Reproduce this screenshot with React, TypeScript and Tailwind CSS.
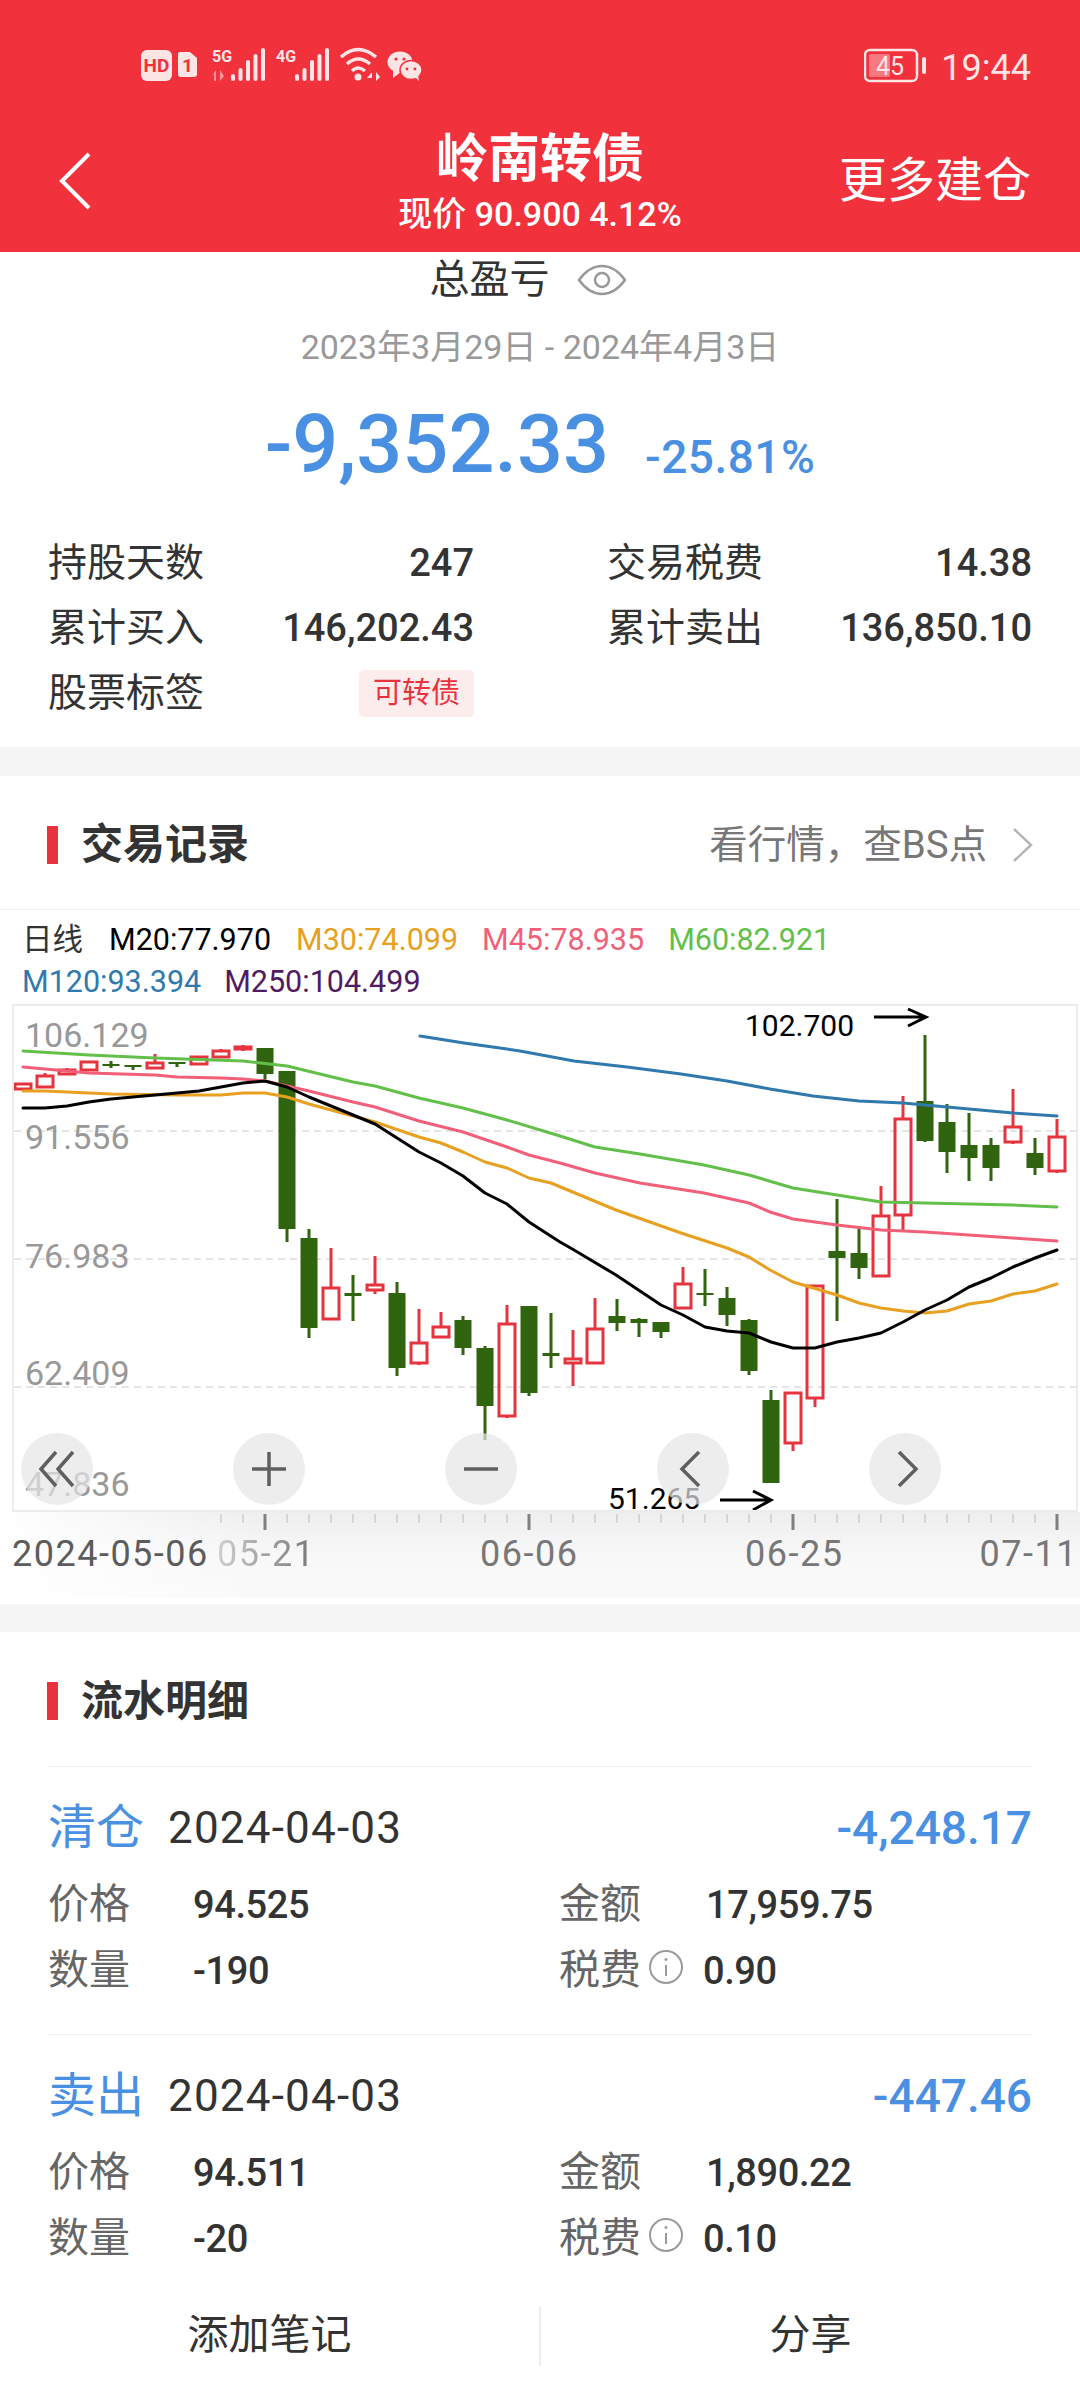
// K-line page of a position detail screen
type Candle = [number, number, number, number, number, boolean]

// [x index, wick top, body top, body bottom, wick bottom, up?]
const candles: Candle[] = [
  [-11, 1084, 1084, 1089, 1089, true],
  [-10, 1073, 1076, 1087, 1087, true],
  [-9, 1068, 1070, 1074, 1074, true],
  [-8, 1062, 1062, 1070, 1070, true],
  [-7, 1061, 1064, 1066, 1068, false],
  [-6, 1065, 1065, 1067, 1070, false],
  [-5, 1054, 1063, 1068, 1068, true],
  [-4, 1062, 1062, 1064, 1067, false],
  [-3, 1057, 1057, 1064, 1064, true],
  [-2, 1049, 1051, 1057, 1057, true],
  [-1, 1045, 1047, 1049, 1051, true],
  [0, 1048, 1048, 1074, 1079, false],
  [1, 1071, 1071, 1229, 1242, false],
  [2, 1229, 1238, 1328, 1338, false],
  [3, 1248, 1288, 1319, 1319, true],
  [4, 1275, 1293, 1296, 1321, false],
  [5, 1256, 1285, 1290, 1294, true],
  [6, 1282, 1293, 1368, 1376, false],
  [7, 1309, 1343, 1363, 1365, true],
  [8, 1312, 1327, 1337, 1337, true],
  [9, 1316, 1320, 1348, 1355, false],
  [10, 1346, 1348, 1406, 1440, false],
  [11, 1305, 1324, 1416, 1418, true],
  [12, 1306, 1306, 1393, 1396, false],
  [13, 1313, 1353, 1356, 1368, false],
  [14, 1330, 1359, 1363, 1386, true],
  [15, 1298, 1329, 1363, 1363, true],
  [16, 1299, 1316, 1323, 1331, false],
  [17, 1318, 1319, 1323, 1337, false],
  [18, 1322, 1322, 1332, 1338, false],
  [19, 1267, 1284, 1308, 1308, true],
  [20, 1269, 1293, 1295, 1306, false],
  [21, 1287, 1298, 1315, 1326, false],
  [22, 1319, 1320, 1371, 1375, false],
  [23, 1390, 1400, 1483, 1483, false],
  [24, 1393, 1393, 1443, 1451, true],
  [25, 1286, 1286, 1398, 1407, true],
  [26, 1199, 1251, 1258, 1321, false],
  [27, 1228, 1253, 1268, 1279, false],
  [28, 1186, 1216, 1276, 1276, true],
  [29, 1096, 1119, 1215, 1230, true],
  [30, 1035, 1101, 1141, 1142, false],
  [31, 1104, 1122, 1152, 1173, false],
  [32, 1113, 1145, 1158, 1181, false],
  [33, 1138, 1145, 1168, 1181, false],
  [34, 1089, 1127, 1142, 1144, true],
  [35, 1138, 1153, 1168, 1175, false],
  [36, 1119, 1137, 1171, 1173, true],
]

const RED = '#e5343e'
const GREEN = '#30640f'

const maLines: { color: string; d: number[][] }[] = [
  {
    color: '#2f79ad',
    d: [[420, 1036], [464, 1043], [507, 1049], [520, 1051], [574, 1061], [627, 1067], [681, 1074], [727, 1081], [770, 1089], [813, 1096], [859, 1101], [903, 1103], [947, 1107], [969, 1109], [1013, 1113], [1057, 1116]],
  },
  {
    color: '#62c04a',
    d: [[23, 1051], [89, 1055], [155, 1058], [243, 1061], [287, 1066], [353, 1082], [375, 1086], [419, 1098], [463, 1108], [507, 1120], [560, 1136], [595, 1147], [640, 1154], [704, 1165], [749, 1175], [793, 1188], [837, 1195], [881, 1202], [925, 1203], [969, 1204], [1013, 1205], [1057, 1207]],
  },
  {
    color: '#f25f78',
    d: [[23, 1067], [89, 1073], [155, 1075], [177, 1077], [221, 1078], [243, 1079], [265, 1081], [309, 1091], [353, 1102], [375, 1107], [419, 1121], [463, 1132], [507, 1147], [529, 1155], [560, 1163], [595, 1173], [640, 1183], [704, 1193], [749, 1203], [770, 1212], [793, 1219], [837, 1225], [881, 1230], [925, 1232], [969, 1235], [1013, 1238], [1057, 1241]],
  },
  {
    color: '#e8a020',
    d: [[23, 1091], [45, 1091], [111, 1094], [177, 1095], [221, 1095], [243, 1093], [265, 1093], [287, 1097], [309, 1104], [353, 1116], [375, 1122], [419, 1137], [441, 1143], [463, 1152], [485, 1162], [507, 1168], [529, 1178], [551, 1183], [616, 1210], [681, 1233], [727, 1248], [749, 1257], [770, 1270], [793, 1282], [837, 1295], [859, 1303], [881, 1308], [903, 1311], [925, 1313], [947, 1311], [969, 1304], [991, 1301], [1013, 1294], [1035, 1291], [1057, 1284]],
  },
  {
    color: '#000000',
    d: [[23, 1108], [45, 1108], [67, 1106], [89, 1102], [111, 1099], [155, 1095], [199, 1091], [221, 1087], [243, 1083], [265, 1081], [287, 1087], [309, 1097], [331, 1106], [353, 1115], [375, 1124], [397, 1138], [419, 1152], [441, 1163], [463, 1176], [485, 1193], [507, 1204], [529, 1222], [560, 1242], [574, 1250], [616, 1275], [661, 1305], [683, 1315], [705, 1327], [727, 1331], [749, 1333], [771, 1342], [793, 1348], [815, 1348], [837, 1342], [859, 1338], [881, 1333], [903, 1322], [925, 1310], [947, 1300], [969, 1287], [991, 1278], [1013, 1267], [1035, 1258], [1057, 1250]],
  },
]

const legendTop = [
  { t: 'M20:77.970', c: 'text-black ml-[26px]' },
  { t: 'M30:74.099', c: 'text-[#e8a020] ml-[25px]' },
  { t: 'M45:78.935', c: 'text-[#f25f78] ml-[24px]' },
  { t: 'M60:82.921', c: 'text-[#62c04a] ml-[24px]' },
]

const axisLabels = [
  { t: '2024-05-06', c: 'left-[12px] text-[#5c5c5c]' },
  { t: '05-21', c: 'left-[217px] bg-gradient-to-r from-[#d0d0d0] to-[#777777] bg-clip-text text-transparent' },
  { t: '06-06', c: 'left-[480px] text-[#777777]' },
  { t: '06-25', c: 'left-[745px] text-[#777777]' },
  { t: '07-11', c: 'right-[2px] text-[#777777]' },
]

function Kline() {
  return (
    <svg viewBox="0 1004 1080 508" className="block w-[1080px] h-[508px]" fill="none">
      <defs>
        <clipPath id="plot">
          <rect x="14" y="1006" width="1064" height="504" />
        </clipPath>
      </defs>
      {[1131, 1259, 1387].map((y) => (
        <line key={y} x1="14" x2="1078" y1={y} y2={y} stroke="#dddddd" strokeWidth="1.5" strokeDasharray="7 5" />
      ))}
      <g fontSize="34" fill="#999999">
        <text x="25" y="1047">106.129</text>
        <text x="25" y="1149">91.556</text>
        <text x="25" y="1268">76.983</text>
        <text x="25" y="1385">62.409</text>
        <text x="25" y="1496">47.836</text>
      </g>
      <g clipPath="url(#plot)">
        {candles.map(([k, wt, bt, bb, wb, up]) => {
          const x = 265 + k * 22
          if (up) {
            return (
              <g key={k} stroke={RED} strokeWidth="3">
                <line x1={x} x2={x} y1={wt} y2={bt} />
                <line x1={x} x2={x} y1={bb} y2={wb} />
                <rect x={x - 8} y={bt} width="16" height={bb - bt} />
              </g>
            )
          }
          return (
            <g key={k} fill={GREEN}>
              <rect x={x - 1.5} y={wt} width="3" height={wb - wt} />
              <rect x={x - 8.5} y={bt} width="17" height={bb - bt} />
            </g>
          )
        })}
        {maLines.map((l) => (
          <polyline
            key={l.color}
            points={l.d.map((p) => p.join(',')).join(' ')}
            stroke={l.color}
            strokeWidth="3"
            strokeLinejoin="round"
            strokeLinecap="round"
          />
        ))}
      </g>
      <g fontSize="30" fill="#000000">
        <text x="745" y="1036">102.700</text>
        <text x="608" y="1509">51.265</text>
      </g>
      <g stroke="#000000" strokeWidth="3">
        <path d="M874 1017H925M908 1009L926 1017L908 1026" />
        <path d="M720 1500H771M753 1491L771 1500L753 1510" />
      </g>
    </svg>
  )
}

function ChartButton({ pos, d }: { pos: string; d: string }) {
  return (
    <div className={`absolute top-[429px] ${pos} flex h-[72px] w-[72px] items-center justify-center rounded-full bg-[#e6e6e6]/70`}>
      <svg width="40" height="40" viewBox="0 0 40 40" fill="none" stroke="#5f5f5f" strokeWidth="3.5">
        <path d={d} />
      </svg>
    </div>
  )
}

function Ticks() {
  const ticks = Array.from({ length: 39 }, (_, i) => 221 + i * 22)
  return (
    <svg viewBox="0 0 1080 20" className="absolute left-0 top-[2px] h-[20px] w-[1080px]">
      {ticks.map((x, i) =>
        (i - 2) % 12 === 0 ? (
          <rect key={x} x={x - 1.5} y="0" width="3" height="16" fill="#808080" />
        ) : (
          <rect key={x} x={x - 0.5} y="0" width="1" height="9" fill="#bdbdbd" />
        ),
      )}
    </svg>
  )
}

function SectionTitle({ title }: { title: string }) {
  return (
    <div className="flex items-center">
      <div className="h-[38px] w-[11px] bg-[#e8333e]" />
      <div className="ml-[23px] text-[42px] font-bold text-[#333333]">{title}</div>
    </div>
  )
}

function StatusIcons() {
  const bars = [
    [0, 7],
    [7.5, 13],
    [15, 21],
    [22.5, 27],
    [30, 33],
  ]
  return (
    <svg viewBox="141 46 285 38" className="h-[38px] w-[285px]" fill="#fde4e5">
      <rect x="141" y="50" width="31" height="31" rx="6" />
      <text x="156.5" y="72" fontSize="19" fontWeight="700" fill="#f1323c" textAnchor="middle">HD</text>
      <path d="M180 52H190L197 58V74Q197 77 194 77H181Q178 77 178 74V54Q178 52 180 52Z" />
      <text x="187.5" y="72" fontSize="19" fontWeight="700" fill="#f1323c" textAnchor="middle">1</text>
      <text x="212" y="62" fontSize="16" fontWeight="700">5G</text>
      <path d="M216 70V81H214V74L212 76ZM220 70L224 76L220 81Z" opacity="0.55" />
      {bars.map(([dx, h]) => (
        <rect key={dx} x={231 + dx} y={81 - h} width="4" height={h} rx="2" />
      ))}
      <text x="276" y="62" fontSize="16" fontWeight="700">4G</text>
      {bars.map(([dx, h]) => (
        <rect key={dx} x={295 + dx} y={81 - h} width="4" height={h} rx="2" />
      ))}
      <g fill="none" stroke="#fde4e5" strokeWidth="3.5">
        <path d="M341 57Q358 42 376 57" />
        <path d="M347 64Q358 54 370 64" />
        <path d="M352 71Q358 65 365 71" />
      </g>
      <circle cx="358" cy="77" r="3.5" />
      <path d="M372 81V72L367 78H372M376 72L380 77L376 81Z" />
      <ellipse cx="400" cy="62" rx="12.5" ry="10.5" />
      <path d="M393 70L393 78L401 72Z" />
      <ellipse cx="411" cy="70" rx="11" ry="9.5" stroke="#f1323c" strokeWidth="1.5" />
      <path d="M415 77L419 81L418 75Z" />
      <circle cx="396" cy="59" r="1.6" fill="#f1323c" />
      <circle cx="404" cy="59" r="1.6" fill="#f1323c" />
      <circle cx="407" cy="69" r="1.4" fill="#f1323c" />
      <circle cx="415" cy="69" r="1.4" fill="#f1323c" />
    </svg>
  )
}

function Battery() {
  return (
    <svg viewBox="866 48 64 36" className="h-[36px] w-[64px]" fill="none">
      <rect x="867" y="50" width="52" height="31" rx="5" stroke="#fde4e5" strokeWidth="2.5" />
      <rect x="871" y="54" width="21" height="23" rx="2" fill="#ffffff" opacity="0.35" />
      <rect x="924" y="57" width="4" height="17" rx="2" fill="#fde4e5" />
      <text x="892" y="75" fontSize="25" fill="#fde4e5" textAnchor="middle">45</text>
    </svg>
  )
}

function Record({ kind, pnl, price, qty, amount, fee }: { kind: string; pnl: string; price: string; qty: string; amount: string; fee: string }) {
  return (
    <div className="mx-[48px] border-t-[1.5px] border-[#efefef]">
      <div className="flex h-[105px] items-center justify-between pt-[17px]">
        <div className="flex items-center">
          <span className="text-[48px] text-[#4a90e2]">{kind}</span>
          <span className="ml-[24px] text-[44px] tracking-[1.2px] text-[#333333]">2024-04-03</span>
        </div>
        <span className="text-[46px] font-medium text-[#4a90e2]">{pnl}</span>
      </div>
      <div className="grid h-[66px] grid-cols-[511px_1fr] items-center">
        <div className="flex items-center">
          <span className="w-[145px] text-[41px] text-[#666666]">价格</span>
          <span className="text-[38px] font-medium tracking-[-0.4px] text-[#333333]">{price}</span>
        </div>
        <div className="flex items-center">
          <span className="w-[147px] text-[41px] text-[#666666]">金额</span>
          <span className="text-[38px] font-medium tracking-[-0.4px] text-[#333333]">{amount}</span>
        </div>
      </div>
      <div className="grid h-[66px] grid-cols-[511px_1fr] items-center">
        <div className="flex items-center">
          <span className="w-[145px] text-[41px] text-[#666666]">数量</span>
          <span className="text-[38px] font-medium tracking-[-0.4px] text-[#333333]">{qty}</span>
        </div>
        <div className="flex items-center">
          <span className="text-[41px] text-[#666666]">税费</span>
          <svg viewBox="0 0 36 36" className="ml-[7px] mb-[8px] h-[36px] w-[36px]" fill="none" stroke="#9a9a9a" strokeWidth="2">
            <circle cx="18" cy="18" r="16" />
            <path d="M18 16V27" />
            <circle cx="18" cy="10.5" r="1.2" fill="#9a9a9a" strokeWidth="0.6" />
          </svg>
          <span className="ml-[19px] text-[38px] font-medium tracking-[-0.4px] text-[#333333]">{fee}</span>
        </div>
      </div>
    </div>
  )
}

export default function App() {
  return (
    <div className="h-[2400px] w-[1080px] overflow-hidden bg-white font-['Roboto','Noto_Sans_CJK_SC',sans-serif]">
      {/* top bar */}
      <div className="h-[252px] bg-[#f1323c] text-white">
        <div className="flex h-[128px] items-start pt-[46px]">
          <div className="ml-[141px]">
            <StatusIcons />
          </div>
          <div className="ml-auto mt-[2px]">
            <Battery />
          </div>
          <span className="ml-[13px] mr-[49px] mt-[2px] text-[36px] leading-[40px] text-[#fde4e5]">19:44</span>
        </div>
        <div className="relative flex h-[124px]">
          <svg viewBox="0 0 34 58" className="ml-[58px] mt-[24px] h-[58px] w-[34px]" fill="none" stroke="#ffffff" strokeWidth="4">
            <path d="M31 2L4 29L31 56" />
          </svg>
          <div className="absolute left-[240px] top-0 flex w-[600px] flex-col items-center">
            <div className="text-[52px] font-bold leading-[64px]">岭南转债</div>
            <div className="mt-[2px] text-[34px] font-medium leading-[40px]">现价 90.900 4.12%</div>
          </div>
          <div className="ml-auto mr-[49px] mt-[25px] text-[48px] leading-[56px]">更多建仓</div>
        </div>
      </div>

      {/* summary */}
      <div className="h-[495px] px-[48px]">
        <div className="flex h-[56px] items-center justify-center pr-[24px]">
          <span className="text-[40px] text-[#333333]">总盈亏</span>
          <svg viewBox="0 0 50 32" className="ml-[27px] h-[32px] w-[50px]" fill="none" stroke="#999999" strokeWidth="2.5">
            <path d="M2 16C10 5 17 2 25 2C33 2 40 5 48 16C40 27 33 30 25 30C17 30 10 27 2 16Z" />
            <circle cx="25" cy="16" r="7" />
          </svg>
        </div>
        <div className="mt-[12px] flex h-[54px] items-center justify-center text-[34px] text-[#999999]">2023年3月29日 - 2024年4月3日</div>
        <div className="mt-[26px] flex h-[90px] items-center justify-center text-[#4a90e2]">
          <span className="text-[81px] font-medium">-9,352.33</span>
          <span className="ml-[36px] mt-[24px] text-[46px] font-medium tracking-[0.5px]">-25.81%</span>
        </div>
        <div className="mt-[41px] grid grid-cols-[426px_1fr] gap-x-[133px] text-[39px] text-[#333333] [&>div]:flex [&>div]:h-[65px] [&>div]:items-center [&>div]:justify-between">
          <div>
            <span>持股天数</span>
            <span className="text-[38px] font-medium">247</span>
          </div>
          <div>
            <span>交易税费</span>
            <span className="text-[38px] font-medium">14.38</span>
          </div>
          <div>
            <span>累计买入</span>
            <span className="text-[38px] font-medium">146,202.43</span>
          </div>
          <div>
            <span>累计卖出</span>
            <span className="text-[38px] font-medium">136,850.10</span>
          </div>
          <div>
            <span>股票标签</span>
            <span className="rounded-[5px] bg-[#fdecec] px-[14px] py-[4px] text-[29px] leading-[39px] text-[#e8333e]">可转债</span>
          </div>
        </div>
      </div>
      <div className="h-[29px] bg-[#f5f5f5]" />

      {/* trade chart */}
      <div className="flex h-[133px] items-center justify-between pl-[47px] pr-[46px] pt-[4px]">
        <SectionTitle title="交易记录" />
        <div className="flex items-center text-[38.5px] text-[#777777]">
          <span>看行情，查BS点</span>
          <svg viewBox="0 0 22 36" className="ml-[25px] h-[36px] w-[22px]" fill="none" stroke="#b5b5b5" strokeWidth="2.5">
            <path d="M2 2L19 18L2 34" />
          </svg>
        </div>
      </div>
      <div className="h-[95px] border-t-[1.5px] border-[#efefef] pl-[22px] pt-[9px] text-[30.5px] leading-[42px]">
        <div className="flex">
          <span className="text-[#333333]">日线</span>
          {legendTop.map((l) => (
            <span key={l.t} className={l.c}>{l.t}</span>
          ))}
        </div>
        <div className="flex">
          <span className="text-[#2f79ad]">M120:93.394</span>
          <span className="ml-[23px] text-[#511b62]">M250:104.499</span>
        </div>
      </div>
      <div className="relative h-[508px] w-[1080px]">
        <div className="absolute bottom-0 left-[12px] right-[2px] top-0 border-2 border-[#ececec]" />
        <Kline />
        <ChartButton pos="left-[21px]" d="M19 3L4 20L19 37M36 3L21 20L36 37" />
        <ChartButton pos="left-[233px]" d="M3 20H37M20 3V37" />
        <ChartButton pos="left-[445px]" d="M3 20H37" />
        <ChartButton pos="left-[657px]" d="M26 3L9 20L26 37" />
        <ChartButton pos="left-[869px]" d="M14 3L31 20L14 37" />
      </div>
      <div className="relative h-[86px] w-[1080px] bg-gradient-to-b from-[#eeeeee] via-[#f8f8f8] to-[#fafafa]">
        <div className="absolute inset-y-0 left-0 w-[260px] bg-gradient-to-r from-white to-transparent" />
        <Ticks />
        {axisLabels.map((a) => (
          <span key={a.t} className={`absolute top-[22px] whitespace-nowrap text-[36px] leading-[40px] tracking-[1.5px] ${a.c}`}>{a.t}</span>
        ))}
      </div>
      <div className="mt-[6px] h-[28px] bg-[#f5f5f5]" />

      {/* flow */}
      <div className="flex h-[134px] items-center pl-[47px] pt-[4px]">
        <SectionTitle title="流水明细" />
      </div>
      <Record kind="清仓" pnl="-4,248.17" price="94.525" qty="-190" amount="17,959.75" fee="0.90" />
      <div className="h-[30px]" />
      <Record kind="卖出" pnl="-447.46" price="94.511" qty="-20" amount="1,890.22" fee="0.10" />
      <div className="mt-[34px] flex h-[60px] items-center text-[41px] text-[#333333]">
        <div className="flex-1 text-center">添加笔记</div>
        <div className="h-[59px] w-[2px] bg-[#eeeeee]" />
        <div className="flex-1 text-center">分享</div>
      </div>
    </div>
  )
}
